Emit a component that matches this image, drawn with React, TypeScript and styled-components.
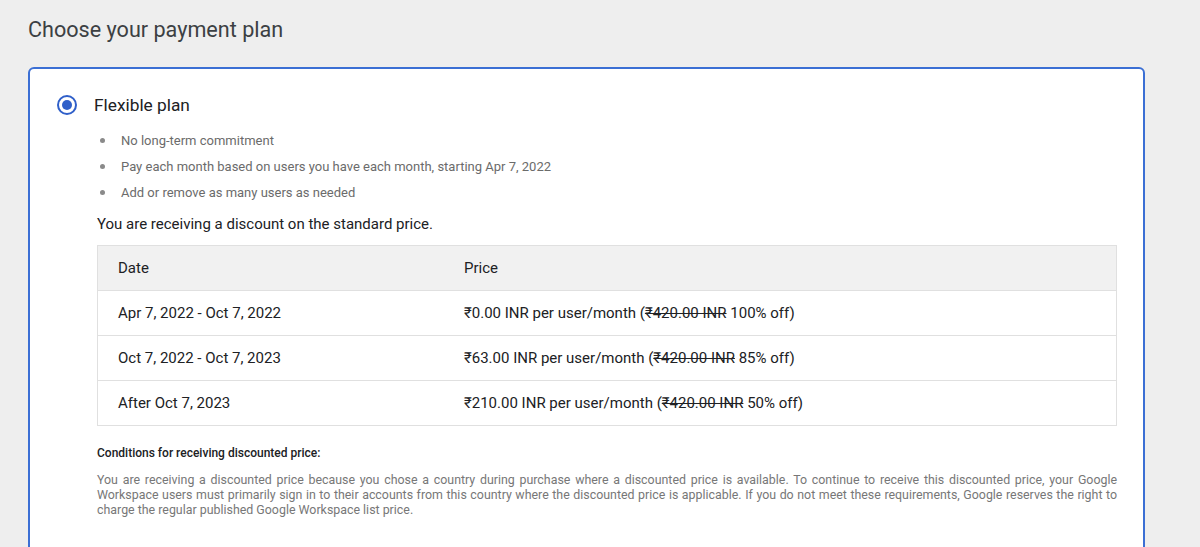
import React from 'react';
import styled, { createGlobalStyle } from 'styled-components';

const GlobalStyle = createGlobalStyle`
  body {
    margin: 0;
    background: #eeeeee;
    font-family: Roboto, 'Liberation Sans', sans-serif;
    color: #202124;
  }
`;

const Page = styled.div`
  padding: 16px 55px 0 28px;
  height: 547px;
  box-sizing: border-box;
  overflow: hidden;
`;

const Title = styled.h1`
  margin: 0 0 23px;
  font-size: 21.6px;
  font-weight: 400;
  color: #3c4043;
  line-height: 28px;
`;

const Card = styled.div`
  background: #fff;
  border: 2px solid #3b6fd4;
  border-radius: 6px;
  padding: 22px 26px 40px 27px;
`;

const PlanHeader = styled.div`
  display: flex;
  align-items: center;
  gap: 17px;
  height: 28px;
`;

const Radio = styled.span`
  width: 16px;
  height: 16px;
  border: 2px solid #2f5fc9;
  border-radius: 50%;
  display: flex;
  align-items: center;
  justify-content: center;
  &::after {
    content: '';
    width: 10px;
    height: 10px;
    border-radius: 50%;
    background: #2f5fc9;
  }
`;

const PlanName = styled.span`
  font-size: 17.3px;
  color: #202124;
`;

const Body = styled.div`
  padding-left: 40px;
`;

const Bullets = styled.ul`
  list-style: none;
  margin: 8px 0 0;
  padding: 0;
`;

const Bullet = styled.li`
  display: flex;
  align-items: center;
  height: 26px;
  font-size: 13px;
  color: #6b6b6b;
  &::before {
    content: '';
    width: 5px;
    height: 5px;
    border-radius: 50%;
    background: #8a8a8a;
    margin: 0 16px 0 3px;
  }
`;

const Discount = styled.p`
  margin: 9px 0 11px;
  font-size: 15px;
  line-height: 20px;
  color: #202124;
`;

const Table = styled.div`
  border: 1px solid #e0e0e0;
`;

const Row = styled.div<{ $head?: boolean }>`
  display: grid;
  grid-template-columns: 346px 1fr;
  align-items: center;
  height: 44px;
  padding-left: 20px;
  font-size: 15px;
  color: #202124;
  background: ${p => (p.$head ? '#f1f1f1' : '#fff')};
  & + & {
    border-top: 1px solid #e0e0e0;
  }
`;

const Struck = styled.s`
  text-decoration: line-through;
`;

const CondTitle = styled.div`
  margin-top: 20px;
  font-size: 12px;
  font-weight: 500;
  color: #202124;
`;

const CondText = styled.p`
  margin: 12px 0 0;
  font-size: 12.4px;
  line-height: 15px;
  color: #777;
  text-align: justify;
`;

const rows = [
  ['Apr 7, 2022 - Oct 7, 2022', '₹0.00', '100%'],
  ['Oct 7, 2022 - Oct 7, 2023', '₹63.00', '85%'],
  ['After Oct 7, 2023', '₹210.00', '50%'],
];

export default function App() {
  return (
    <>
      <GlobalStyle />
      <Page>
        <Title>Choose your payment plan</Title>
        <Card>
          <PlanHeader>
            <Radio />
            <PlanName>Flexible plan</PlanName>
          </PlanHeader>
          <Body>
            <Bullets>
              <Bullet>No long-term commitment</Bullet>
              <Bullet>Pay each month based on users you have each month, starting Apr 7, 2022</Bullet>
              <Bullet>Add or remove as many users as needed</Bullet>
            </Bullets>
            <Discount>You are receiving a discount on the standard price.</Discount>
            <Table>
              <Row $head>
                <span>Date</span>
                <span>Price</span>
              </Row>
              {rows.map(([date, price, off]) => (
                <Row key={date}>
                  <span>{date}</span>
                  <span>
                    {price} INR per user/month (<Struck>₹420.00 INR</Struck> {off} off)
                  </span>
                </Row>
              ))}
            </Table>
            <CondTitle>Conditions for receiving discounted price:</CondTitle>
            <CondText>
              You are receiving a discounted price because you chose a country during purchase where a discounted
              price is available. To continue to receive this discounted price, your Google Workspace users must
              primarily sign in to their accounts from this country where the discounted price is applicable. If you
              do not meet these requirements, Google reserves the right to charge the regular published Google
              Workspace list price.
            </CondText>
          </Body>
        </Card>
      </Page>
    </>
  );
}
